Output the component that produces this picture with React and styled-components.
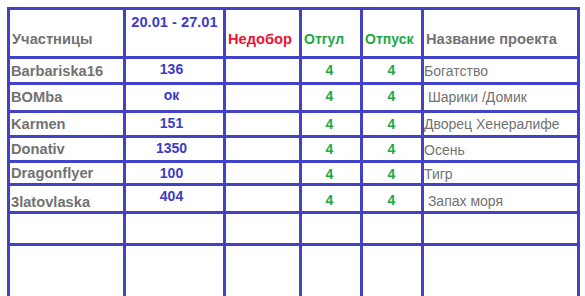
import React from "react";
import styled, { createGlobalStyle } from "styled-components";

const Global = createGlobalStyle`
  html, body { margin: 0; padding: 0; background: #ffffff; overflow: hidden; }
  body { font-family: "Liberation Sans", Arial, sans-serif; }
`;

const Page = styled.div`
  padding: 7px 7px 0 7px;
`;

const Table = styled.div`
  display: grid;
  width: max-content;
  grid-template-columns: 113px 97px 73px 58px 58px 153px;
  grid-template-rows: 46px 23px 25px 22px 22px 20px 25px 29px 50px;
  gap: 3px;
  padding: 3px 3px 0 3px;
  background: #4242c8;
`;

const Cell = styled.div`
  background: #ffffff;
  display: flex;
  overflow: hidden;
  white-space: pre;
  line-height: 17px;
`;

const HeadCell = styled(Cell)`
  font-weight: bold;
  font-size: ${(p) => p.$size || "14.67px"};
  color: ${(p) => p.$color};
  align-items: ${(p) => (p.$top ? "flex-start" : "flex-end")};
  justify-content: ${(p) => (p.$center ? "center" : "flex-start")};
  padding: ${(p) => (p.$top ? "4px 0 0 0" : "0 0 8px 2px")};
`;

const NameCell = styled(Cell)`
  font-weight: bold;
  font-size: 14.67px;
  color: #727272;
  align-items: flex-end;
  padding: 0 0 ${(p) => p.$pb ?? 3}px 1px;
`;

const NumCell = styled(Cell)`
  font-weight: bold;
  font-size: 14px;
  color: #3c3cc4;
  align-items: flex-start;
  justify-content: center;
  padding: 2px 6px 0 0;
`;

const MarkCell = styled(Cell)`
  font-weight: bold;
  font-size: 14px;
  color: #22a845;
  align-items: flex-start;
  justify-content: center;
  padding: ${(p) => p.$pt ?? 3}px ${(p) => p.$pr ?? 2}px 0 0;
`;

const ProjectCell = styled(Cell)`
  font-size: 14px;
  color: #727272;
  align-items: flex-end;
  padding: 0 0 ${(p) => p.$pb ?? 3}px 0;
`;

const rows = [
  { name: "Barbariska16", num: "136", project: "Богатство", nb: 2, pb: 2 },
  { name: "BOMba", num: "ок", project: " Шарики /Домик", nb: 4, pb: 4 },
  { name: "Karmen", num: "151", project: "Дворец Хенералифе", nb: 2, pb: 2 },
  { name: "Donativ", num: "1350", project: "Осень", nb: 2, pb: 1 },
  { name: "Dragonflyer", num: "100", project: "Тигр", nb: 1, pb: 0 },
  { name: "3latovlaska", num: "404", project: " Запах моря", nb: 0, pb: 1, mt: 6 },
];

export default function App() {
  return (
    <Page>
      <Global />
      <Table>
        <HeadCell $color="#727272">Участницы</HeadCell>
        <HeadCell $color="#3c3cc4" $top $center>20.01 - 27.01</HeadCell>
        <HeadCell $color="#ee1133">Недобор</HeadCell>
        <HeadCell $color="#22a845" $size="14px">Отгул</HeadCell>
        <HeadCell $color="#22a845" $size="14px">Отпуск</HeadCell>
        <HeadCell $color="#727272">Название проекта</HeadCell>
        {rows.map((r) => (
          <React.Fragment key={r.name}>
            <NameCell $pb={r.nb}>{r.name}</NameCell>
            <NumCell>{r.num}</NumCell>
            <Cell />
            <MarkCell $pt={r.mt} $pr={3}>4</MarkCell>
            <MarkCell $pt={r.mt} $pr={1}>4</MarkCell>
            <ProjectCell $pb={r.pb}>{r.project}</ProjectCell>
          </React.Fragment>
        ))}
        {[0, 1].map((i) =>
          [0, 1, 2, 3, 4, 5].map((j) => <Cell key={`e${i}${j}`} />)
        )}
      </Table>
    </Page>
  );
}
